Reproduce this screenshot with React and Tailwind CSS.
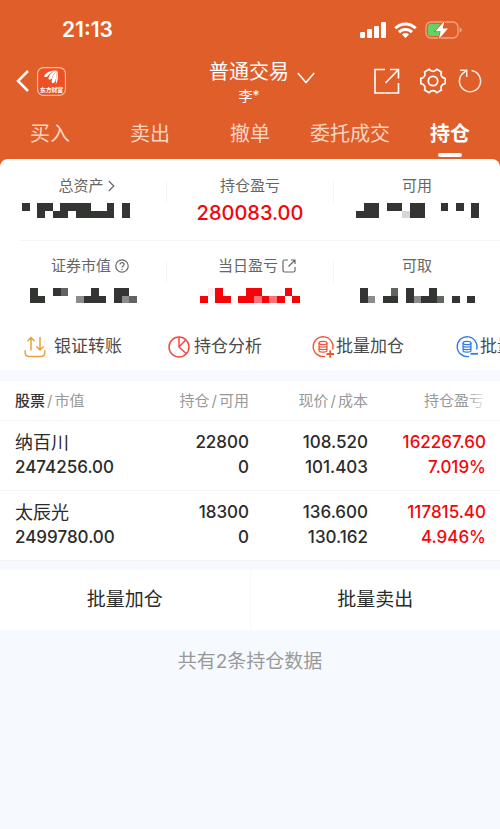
import { useState } from "react";

const tabs = ["买入", "卖出", "撤单", "委托成交", "持仓"];

const posiciones = [
  { nombre: "纳百川", valor: "2474256.00", cantidad: "22800", disponible: "0", precio: "108.520", costo: "101.403", ganancia: "162267.60", porcentaje: "7.019%" },
  { nombre: "太辰光", valor: "2499780.00", cantidad: "18300", disponible: "0", precio: "136.600", costo: "130.162", ganancia: "117815.40", porcentaje: "4.946%" },
];

const colores = {
  "#": "#323532",
  m: "#626462",
  g: "#8d8b8d",
  l: "#d6d6d6",
  r: "#f5050a",
  q: "#fb7378",
  p: "#ffecef",
};

// Valor oculto: dos filas de celdas, un carácter por celda
function Mosaico({ filas }) {
  const columnas = filas[0].length;
  return (
    <svg
      className="h-[15px]"
      style={{ width: Math.round((columnas * 23) / 3) }}
      viewBox={`0 0 ${columnas} 2`}
      preserveAspectRatio="none"
      shapeRendering="crispEdges"
      aria-hidden="true"
    >
      {filas.map((fila, y) =>
        [...fila].map((c, x) =>
          colores[c] ? <rect key={`${x}-${y}`} x={x} y={y} width="1" height="1" fill={colores[c]} /> : null
        )
      )}
    </svg>
  );
}

function BarraEstado() {
  return (
    <div className="flex h-[60px] items-center justify-between pl-[62px] pr-[38px]">
      <span className="text-[21px] font-semibold">21:13</span>
      <div className="flex items-center gap-2">
        <svg width="26" height="16" viewBox="0 0 26 16" fill="#fff" aria-hidden="true">
          <rect x="0" y="10" width="5" height="6" rx="1" />
          <rect x="7" y="7" width="5" height="9" rx="1" />
          <rect x="14" y="4" width="5" height="12" rx="1" />
          <rect x="21" y="0" width="5" height="16" rx="1" />
        </svg>
        <svg width="23" height="16" viewBox="0 0 23 16" fill="none" stroke="#fff" strokeWidth="3" aria-hidden="true">
          <path d="M1.300 6.200a14.400 14.400 0 0 1 20.400 0" />
          <path d="M5 10.100a9.200 9.200 0 0 1 13 0" />
          <path d="M11.500 16 8 12.400a5 5 0 0 1 7 0z" fill="#fff" stroke="none" />
        </svg>
        <svg width="37" height="18" viewBox="0 0 37 18" fill="none" aria-hidden="true">
          <rect x="1" y="1" width="32" height="16" rx="5" stroke="#f0a582" strokeWidth="1.300" />
          <path d="M34.600 6.400c1.600.5 2.200 1.500 2.200 2.600s-.6 2.100-2.200 2.600z" fill="#f0a582" />
          <rect x="3" y="3" width="13" height="12" rx="2.500" fill="#62d264" />
          <path d="M19.500 0 10.500 10.200h5.200L13.800 18 23 7.600h-5.400z" fill="#fff" stroke="#df5e29" strokeWidth="1.500" paintOrder="stroke" />
        </svg>
      </div>
    </div>
  );
}

function Logo() {
  return (
    <svg width="29" height="29" viewBox="0 0 29 29" role="img" aria-label="东方财富">
      <rect x=".6" y=".6" width="27.800" height="27.800" rx="6" fill="#ee4f24" stroke="#f8c3ac" strokeWidth="1.100" />
      <g fill="#fff">
        <path d="M7 9.600C8.500 5.500 13 3.300 19.800 3.400 14.200 4.600 12.400 7 10.600 9.200 9.600 10.200 8 10.400 7 9.600z" />
        <path d="M11.400 12.100c.8-4.500 3.600-7.600 8.700-8.500-3.600 2.600-4.100 5-5.100 7.500-.8 1.500-2.500 2-3.600 1z" />
        <path d="M14.900 16.200c-.6-5 1.500-9.800 5.500-12.500-1.600 4-.9 6.300-1.800 9.500-.6 2-2.100 3.300-3.700 3z" />
        <path d="M18.600 17.400c1.300-4.600-.2-8.700 1.900-13.400.6 4.400 1.100 9.800-1.900 13.400z" />
      </g>
      <text x="14.500" y="24.500" textAnchor="middle" fontSize="5.800" fontWeight="700" fill="#fff">东方财富</text>
    </svg>
  );
}

function Cabecera() {
  return (
    <div className="grid h-[48px] grid-cols-[1fr_auto_1fr] items-center pl-4 pr-[18px]">
      <div className="flex items-center gap-2 pb-1.5">
        <button type="button" aria-label="返回">
          <svg width="13" height="22" viewBox="0 0 13 22" fill="none" stroke="#fff" strokeWidth="2.500" aria-hidden="true">
            <path d="M12 1 2 11l10 10" />
          </svg>
        </button>
        <Logo />
      </div>
      <button type="button" className="relative flex flex-col items-center">
        <span className="text-[20px] leading-6">普通交易</span>
        <span className="text-[14px] leading-6">李*</span>
        <svg className="absolute left-full top-3 ml-2" width="18" height="12" viewBox="0 0 18 12" fill="none" stroke="#fff" strokeWidth="1.500" aria-hidden="true">
          <path d="m.8 1 8.200 9.500L17.200 1" />
        </svg>
      </button>
      <div className="flex items-center justify-end pb-1.5">
        <button type="button" aria-label="分享" className="mr-5">
          <svg width="26" height="26" viewBox="0 0 26 26" fill="none" stroke="#fff" strokeWidth="1.600" aria-hidden="true">
            <path d="M11 1.500H1V25h23.500V15M16 1.500h8.500v9M24.300 1.700 11.500 15" />
          </svg>
        </button>
        <button type="button" aria-label="设置" className="mr-3">
          <svg width="26" height="26" viewBox="0 0 26 26" fill="none" stroke="#fff" strokeWidth="1.700" strokeLinejoin="round" aria-hidden="true">
            <path d="M9.200 1.200C10.200 2.600 11.500 3.300 13 3.300s2.800-.7 3.800-2.100l4.700 2.700c-.7 1.600-.6 3.100.1 4.300.8 1.300 2 2 3.600 2.200v5.200c-1.700.2-2.900.9-3.600 2.200-.8 1.300-.8 2.700-.1 4.300l-4.700 2.700c-1-1.400-2.300-2.100-3.800-2.100s-2.800.7-3.800 2.100l-4.700-2.700c.7-1.600.6-3-.1-4.300-.8-1.300-2-2-3.600-2.200v-5.200c1.600-.2 2.800-.9 3.600-2.200.7-1.200.8-2.700.1-4.300z" />
            <circle cx="13" cy="13" r="4.700" />
          </svg>
        </button>
        <button type="button" aria-label="刷新">
          <svg width="24" height="24" viewBox="0 0 24 24" fill="none" stroke="#fdeadf" strokeWidth="1.500" aria-hidden="true">
            <path d="M13.500 1.600A10.600 10.600 0 1 1 4.300 4.800L8.700 1.200" />
            <path d="M2 1.200h6.700v6.800" />
          </svg>
        </button>
      </div>
    </div>
  );
}

function Dato({ etiqueta, icono, children }) {
  return (
    <div className="flex flex-col items-center">
      <div className="flex h-6 items-center text-[15px] text-[#666]">
        {etiqueta}
        {/* El icono cuelga a la derecha sin mover el texto centrado */}
        {icono && <span className="w-0 pl-1">{icono}</span>}
      </div>
      {children}
    </div>
  );
}

function Separador() {
  return <div className="mt-2 h-5 w-px bg-[#f3f3f3]" />;
}

function Resumen() {
  return (
    <section>
      <div className="grid h-[81px] grid-cols-[1fr_auto_1fr_auto_1fr] pt-[15px]">
        <Dato
          etiqueta="总资产"
          icono={
            <svg width="7" height="12" viewBox="0 0 7 12" className="max-w-none" fill="none" stroke="#666" strokeWidth="1.200" aria-hidden="true">
              <path d="m.8 1 5 5-5 5" />
            </svg>
          }
        >
          <div className="pt-[5px]">
            <Mosaico filas={["#.##.####..#.#..", "..#.##.#####.#.."]} />
          </div>
        </Dato>
        <Separador />
        <Dato etiqueta="持仓盈亏">
          <span className="text-[20px] font-medium leading-[30px] text-[#f5050a]">280083.00</span>
        </Dato>
        <Separador />
        <Dato etiqueta="可用">
          <div className="pt-[5px]">
            <Mosaico filas={[".##.##.##..#.#.#", "###...l##......#"]} />
          </div>
        </Dato>
      </div>
      <div className="ml-5 h-px bg-[#f5f5f5]" />
      <div className="grid h-[81px] grid-cols-[1fr_auto_1fr_auto_1fr] pt-[13px]">
        <Dato
          etiqueta="证券市值"
          icono={
            <svg width="14" height="14" viewBox="0 0 14 14" className="max-w-none" fill="none" stroke="#666" strokeWidth="1.200" aria-hidden="true">
              <circle cx="7" cy="7" r="6.200" />
              <path d="M5 5.600c0-2.600 4.100-2.500 4.100 0C9.100 7 7 7 7 8.600M7 9.700V11" />
            </svg>
          }
        >
          <div className="pt-[10px]">
            <Mosaico filas={["#..#m...#..##.", "##....g###.#gm"]} />
          </div>
        </Dato>
        <Separador />
        <Dato
          etiqueta="当日盈亏"
          icono={
            <svg width="14" height="14" viewBox="0 0 14 14" className="max-w-none" fill="none" stroke="#666" strokeWidth="1.200" aria-hidden="true">
              <path d="M6 1H2.500Q1 1 1 2.500v9Q1 13 2.500 13h9q1.500 0 1.500-1.500V8M9 1h4v4M13 1 6.500 7.500" />
            </svg>
          }
        >
          <div className="pt-[10px]">
            <Mosaico filas={[".pr...rr...r.", "r.rr.rrqrqr.r"]} />
          </div>
        </Dato>
        <Separador />
        <Dato etiqueta="可取">
          <div className="pt-[10px]">
            <Mosaico filas={["#...m.#..#.....", "#g.##.#g##m.#.#"]} />
          </div>
        </Dato>
      </div>
    </section>
  );
}

function IconoTransferir() {
  return (
    <svg width="22" height="22" viewBox="0 0 22 22" fill="none" stroke="#e9a13b" strokeWidth="1.500" strokeLinecap="round" strokeLinejoin="round" aria-hidden="true">
      <path d="M1.200 14.800v1.700q0 4 4 4h11.600q4 0 4-4v-1.700" />
      <path d="M7 14V1.500M3.800 4.800 7 1.500l3.200 3.300M16 1.500V14M12.800 10.800 16 14l3.200-3.200" />
    </svg>
  );
}

function IconoAnalisis() {
  return (
    <svg width="22" height="22" viewBox="0 0 22 22" fill="none" stroke="#ee4a45" strokeWidth="1.500" aria-hidden="true">
      <circle cx="11" cy="11" r="10" />
      <path d="M11 1v10l7.500 6.700M11 11l7-7.200" />
    </svg>
  );
}

function IconoLote({ color, signo }) {
  return (
    <svg width="22" height="22" viewBox="0 0 22 22" fill="none" stroke={color} strokeWidth="1.400" aria-hidden="true">
      <path d="M13 20.400A9.900 9.900 0 1 1 20.600 13.500" />
      <ellipse cx="11" cy="7" rx="4" ry="1.700" strokeWidth="1.200" />
      <path strokeWidth="1.200" d="M7 7v7.500c0 2.200 8 2.200 8 0V7M7 9.500c0 2.200 8 2.200 8 0M7 12c0 2.200 8 2.200 8 0" />
      <path strokeWidth="1.800" d={signo === "+" ? "M14.500 18H22M18.200 14.300v7.500" : "M14.500 17.800H22"} />
    </svg>
  );
}

function Acciones() {
  const acciones = [
    { texto: "银证转账", icono: <IconoTransferir />, espacio: "gap-2" },
    { texto: "持仓分析", icono: <IconoAnalisis />, espacio: "gap-1" },
    { texto: "批量加仓", icono: <IconoLote color="#ee5533" signo="+" />, espacio: "gap-0.5" },
    { texto: "批量卖出", icono: <IconoLote color="#2f7bea" signo="-" />, espacio: "gap-0.5" },
  ];
  return (
    <div className="flex h-12 overflow-hidden pl-6 pt-0.5">
      {acciones.map((a) => (
        <button key={a.texto} type="button" className={`flex w-36 shrink-0 items-center text-[17px] text-[#4a4a4a] ${a.espacio}`}>
          {a.icono}
          {a.texto}
        </button>
      ))}
    </div>
  );
}

function TablaPosiciones() {
  return (
    <div className="relative bg-white">
      <table className="w-full table-fixed text-right text-[17px] font-medium leading-[25px] text-[#2b2b2b]">
        <thead>
          <tr className="h-[39px] border-b border-[#f3f3f3] text-[15px] text-[#999]">
            <th className="pl-[15px] text-left font-normal">
              <span className="font-medium text-[#333]">股票</span>
              <span className="px-0.5">/</span>市值
            </th>
            <th className="w-[119px] font-normal">持仓<span className="px-0.5">/</span>可用</th>
            <th className="w-[119px] font-normal">现价<span className="px-0.5">/</span>成本</th>
            <th className="w-[132px] pr-4 font-normal">持仓盈亏</th>
          </tr>
        </thead>
        <tbody>
          {posiciones.map((p) => (
            <tr key={p.nombre} className="h-[70px] border-b border-[#f3f3f3]">
              <td className="pl-[15px] text-left">
                <div className="text-[18px] font-normal leading-[25px]">{p.nombre}</div>
                <div>{p.valor}</div>
              </td>
              <td>
                <div>{p.cantidad}</div>
                <div>{p.disponible}</div>
              </td>
              <td>
                <div>{p.precio}</div>
                <div>{p.costo}</div>
              </td>
              <td className="pr-3.5 text-[#f5050a]">
                <div>{p.ganancia}</div>
                <div>{p.porcentaje}</div>
              </td>
            </tr>
          ))}
        </tbody>
      </table>
      {/* Desvanecido del borde derecho de la cabecera */}
      <div className="absolute right-3 top-1 h-8 w-5 bg-linear-to-r from-transparent to-white" />
    </div>
  );
}

export default function App() {
  const [activa, setActiva] = useState("持仓");

  return (
    <div className="min-h-screen bg-[#f6faff] font-['Inter','Noto_Sans_CJK_SC',sans-serif]">
      <header className="bg-[#df5e29] text-white">
        <BarraEstado />
        <Cabecera />
        <nav className="grid h-[51px] grid-cols-5 text-[20px]">
          {tabs.map((t) => (
            <button
              key={t}
              type="button"
              onClick={() => setActiva(t)}
              className={t === activa ? "flex flex-col items-center justify-between pb-0.5 pt-[11px] font-bold leading-[30px]" : "flex flex-col items-center pt-[11px] leading-[30px] text-[#fbd5c2]"}
            >
              {t}
              {t === activa && <span className="h-1 w-6 rounded-sm bg-white" />}
            </button>
          ))}
        </nav>
      </header>

      <main>
        <div className="bg-[#df5e29]">
          <div className="rounded-t-lg bg-white">
            <Resumen />
            <Acciones />
          </div>
        </div>
        <div className="h-[11px]" />
        <TablaPosiciones />
        <div className="mt-[9px] grid grid-cols-2 gap-px text-[19px] text-[#2b2b2b]">
          <button type="button" className="h-[60px] bg-white pt-0.5">批量加仓</button>
          <button type="button" className="h-[60px] bg-white pt-0.5">批量卖出</button>
        </div>
        <p className="pt-4 text-center text-[19px] leading-8 text-[#999]">共有2条持仓数据</p>
      </main>
    </div>
  );
}
